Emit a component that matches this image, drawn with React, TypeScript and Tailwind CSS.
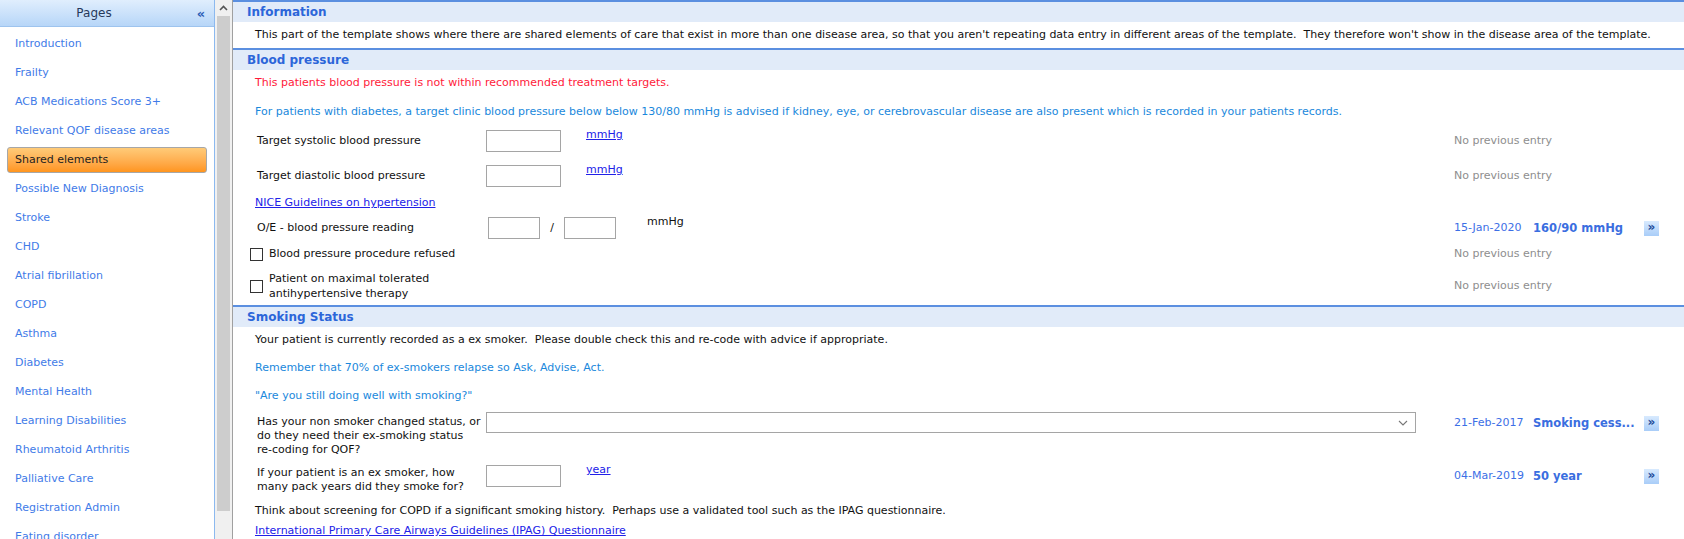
import React from "react";

const pages = [
  "Introduction",
  "Frailty",
  "ACB Medications Score 3+",
  "Relevant QOF disease areas",
  "Shared elements",
  "Possible New Diagnosis",
  "Stroke",
  "CHD",
  "Atrial fibrillation",
  "COPD",
  "Asthma",
  "Diabetes",
  "Mental Health",
  "Learning Disabilities",
  "Rheumatoid Arthritis",
  "Palliative Care",
  "Registration Admin",
  "Eating disorder",
];

function Sidebar() {
  return (
    <div className="flex h-full w-[215px] shrink-0 flex-col border-r border-[#8cb9ef] bg-white">
      <div className="flex h-[27px] shrink-0 items-center border-b border-[#9ec4ee] bg-linear-to-b from-[#e0eefd] to-[#b7d6f8]">
        <span className="flex-1 text-center text-[12px] text-[#26395b]">Pages</span>
        <span className="w-[26px] text-center text-[13px] font-bold leading-none text-[#2a5bb5]">«</span>
      </div>
      <div className="flex flex-col pt-[2px]">
        {pages.map((p) =>
          p === "Shared elements" ? (
            <div key={p} className="flex h-[29px] items-center px-[7px]">
              <div className="flex h-[26px] w-[200px] items-center rounded-[3px] border border-[#a7a7a7] bg-linear-to-b from-[#ffcb78] to-[#ff951c] pl-[7px] text-[#1f1f1f]">
                {p}
              </div>
            </div>
          ) : (
            <div key={p} className="flex h-[29px] items-center pl-[15px] text-[#3f7be8]">
              {p}
            </div>
          )
        )}
      </div>
    </div>
  );
}

function Scrollbar() {
  return (
    <div className="flex h-full w-[17px] shrink-0 flex-col bg-[#f0f0f0]">
      <div className="flex h-[16px] items-center justify-center">
        <svg width="9" height="6" viewBox="0 0 9 6">
          <path d="M1 5 L4.5 1.5 L8 5" fill="none" stroke="#555" strokeWidth="1.6" />
        </svg>
      </div>
      <div className="mx-[2px] h-[495px] bg-[#cdcdcd]" />
    </div>
  );
}

function Arrow() {
  return (
    <span className="flex h-[15px] w-[15px] items-center justify-center bg-linear-to-b from-[#d8eafe] to-[#a9cdf8] pb-[2px] text-[12px] font-bold leading-none text-[#1d4a98]">
      »
    </span>
  );
}

function History({ date, value }: { date?: string; value?: string }) {
  return (
    <div className="flex h-[22px] w-[230px] shrink-0 items-center pr-[25px]">
      {date ? (
        <>
          <span className="w-[79px] text-[#3c6fe6]">{date}</span>
          <span className="flex-1 text-[11.5px] font-bold text-[#3a6ee0]">{value}</span>
          <Arrow />
        </>
      ) : (
        <span className="text-[#8e8e8e]">No previous entry</span>
      )}
    </div>
  );
}

function SectionHeader({ title }: { title: string }) {
  return (
    <div className="flex h-[22px] items-center border-t-2 border-[#5b8fe0] bg-[#e1ebf9] pl-[14px] text-[12px] font-bold text-[#2c66d9]">
      {title}
    </div>
  );
}

function Input({ w }: { w: string }) {
  return <div className={`h-[22px] ${w} border border-[#a5a5a5] bg-white`} />;
}

function Link({ children }: { children: React.ReactNode }) {
  return <a className="cursor-pointer text-[#2121e8] underline">{children}</a>;
}

function Checkbox() {
  return <div className="h-[13px] w-[13px] shrink-0 border border-[#333] bg-white" />;
}

export default function App() {
  return (
    <div className="flex h-[539px] w-full overflow-hidden bg-white font-['DejaVu_Sans',sans-serif] text-[11px] leading-[14px] text-[#111]">
      <Sidebar />
      <Scrollbar />
      <div className="flex min-w-0 flex-1 flex-col border-l border-[#a0a0a0]">
        <SectionHeader title="Information" />
        <div className="flex h-[26px] items-center pl-[22px] whitespace-nowrap">
          This part of the template shows where there are shared elements of care that exist in more than one disease area, so that you aren't repeating data entry in different areas of the template.&nbsp; They therefore won't show in the disease area of the template.
        </div>

        <SectionHeader title="Blood pressure" />
        <div className="flex flex-col pb-[4px] pl-[22px]">
          <div className="mt-[3px] flex h-[20px] items-center text-[#ff1a3a]">
            This patients blood pressure is not within recommended treatment targets.
          </div>
          <div className="mt-[11px] flex h-[16px] items-center text-[#1a88dc]">
            For patients with diabetes, a target clinic blood pressure below below 130/80 mmHg is advised if kidney, eye, or cerebrovascular disease are also present which is recorded in your patients records.
          </div>

          <div className="mt-[10px] flex h-[22px] items-center">
            <div className="w-[231px] shrink-0 pl-[2px]">Target systolic blood pressure</div>
            <div className="flex flex-1 items-start self-stretch">
              <Input w="w-[75px]" />
              <span className="-mt-[2px] ml-[25px]">
                <Link>mmHg</Link>
              </span>
            </div>
            <History />
          </div>

          <div className="mt-[13px] flex h-[22px] items-center">
            <div className="w-[231px] shrink-0 pl-[2px]">Target diastolic blood pressure</div>
            <div className="flex flex-1 items-start self-stretch">
              <Input w="w-[75px]" />
              <span className="-mt-[2px] ml-[25px]">
                <Link>mmHg</Link>
              </span>
            </div>
            <History />
          </div>

          <div className="mt-[8px] flex h-[16px] items-center">
            <Link>NICE Guidelines on hypertension</Link>
          </div>

          <div className="mt-[6px] flex h-[22px] items-center">
            <div className="w-[231px] shrink-0 pl-[2px]">O/E - blood pressure reading</div>
            <div className="flex flex-1 items-start self-stretch pl-[2px]">
              <Input w="w-[52px]" />
              <span className="flex h-[22px] w-[24px] items-center justify-center">/</span>
              <Input w="w-[52px]" />
              <span className="-mt-[2px] ml-[31px]">mmHg</span>
            </div>
            <History date="15-Jan-2020" value="160/90 mmHg" />
          </div>

          <div className="mt-[7px] flex h-[16px] items-center">
            <div className="-ml-[5px] flex w-[236px] shrink-0 items-center">
              <Checkbox />
              <span className="ml-[6px]">Blood pressure procedure refused</span>
            </div>
            <div className="flex-1" />
            <History />
          </div>

          <div className="mt-[9px] flex h-[30px] items-center">
            <div className="-ml-[5px] flex w-[236px] shrink-0 items-center">
              <Checkbox />
              <span className="ml-[6px] leading-[15px]">
                Patient on maximal tolerated
                <br />
                antihypertensive therapy
              </span>
            </div>
            <div className="flex-1" />
            <History />
          </div>
        </div>

        <SectionHeader title="Smoking Status" />
        <div className="flex flex-col pl-[22px]">
          <div className="mt-[5px] flex h-[16px] items-center">
            Your patient is currently recorded as a ex smoker.&nbsp; Please double check this and re-code with advice if appropriate.
          </div>
          <div className="mt-[12px] flex h-[16px] items-center text-[#1a88dc]">
            Remember that 70% of ex-smokers relapse so Ask, Advise, Act.
          </div>
          <div className="mt-[12px] flex h-[16px] items-center text-[#1a88dc]">
            "Are you still doing well with smoking?"
          </div>

          <div className="mt-[8px] flex items-start">
            <div className="w-[231px] shrink-0 pl-[2px] pt-[3px]">
              Has your non smoker changed status, or
              <br />
              do they need their ex-smoking status
              <br />
              re-coding for QOF?
            </div>
            <div className="flex flex-1 items-start">
              <div className="flex h-[21px] w-[930px] items-center justify-end border border-[#a5a5a5] bg-white pr-[7px]">
                <svg width="10" height="6" viewBox="0 0 10 6">
                  <path d="M1 1 L5 5 L9 1" fill="none" stroke="#777" strokeWidth="1.1" />
                </svg>
              </div>
            </div>
            <History date="21-Feb-2017" value="Smoking cess..." />
          </div>

          <div className="mt-[8px] flex items-start">
            <div className="w-[231px] shrink-0 pl-[2px] pt-[1px]">
              If your patient is an ex smoker, how
              <br />
              many pack years did they smoke for?
            </div>
            <div className="flex flex-1 items-start">
              <Input w="w-[75px]" />
              <span className="-mt-[2px] ml-[25px]">
                <Link>year</Link>
              </span>
            </div>
            <History date="04-Mar-2019" value="50 year" />
          </div>

          <div className="mt-[9px] flex h-[16px] items-center">
            Think about screening for COPD if a significant smoking history.&nbsp; Perhaps use a validated tool such as the IPAG questionnaire.
          </div>
          <div className="mt-[4px] flex h-[16px] items-center">
            <Link>International Primary Care Airways Guidelines (IPAG) Questionnaire</Link>
          </div>
        </div>
      </div>
    </div>
  );
}
